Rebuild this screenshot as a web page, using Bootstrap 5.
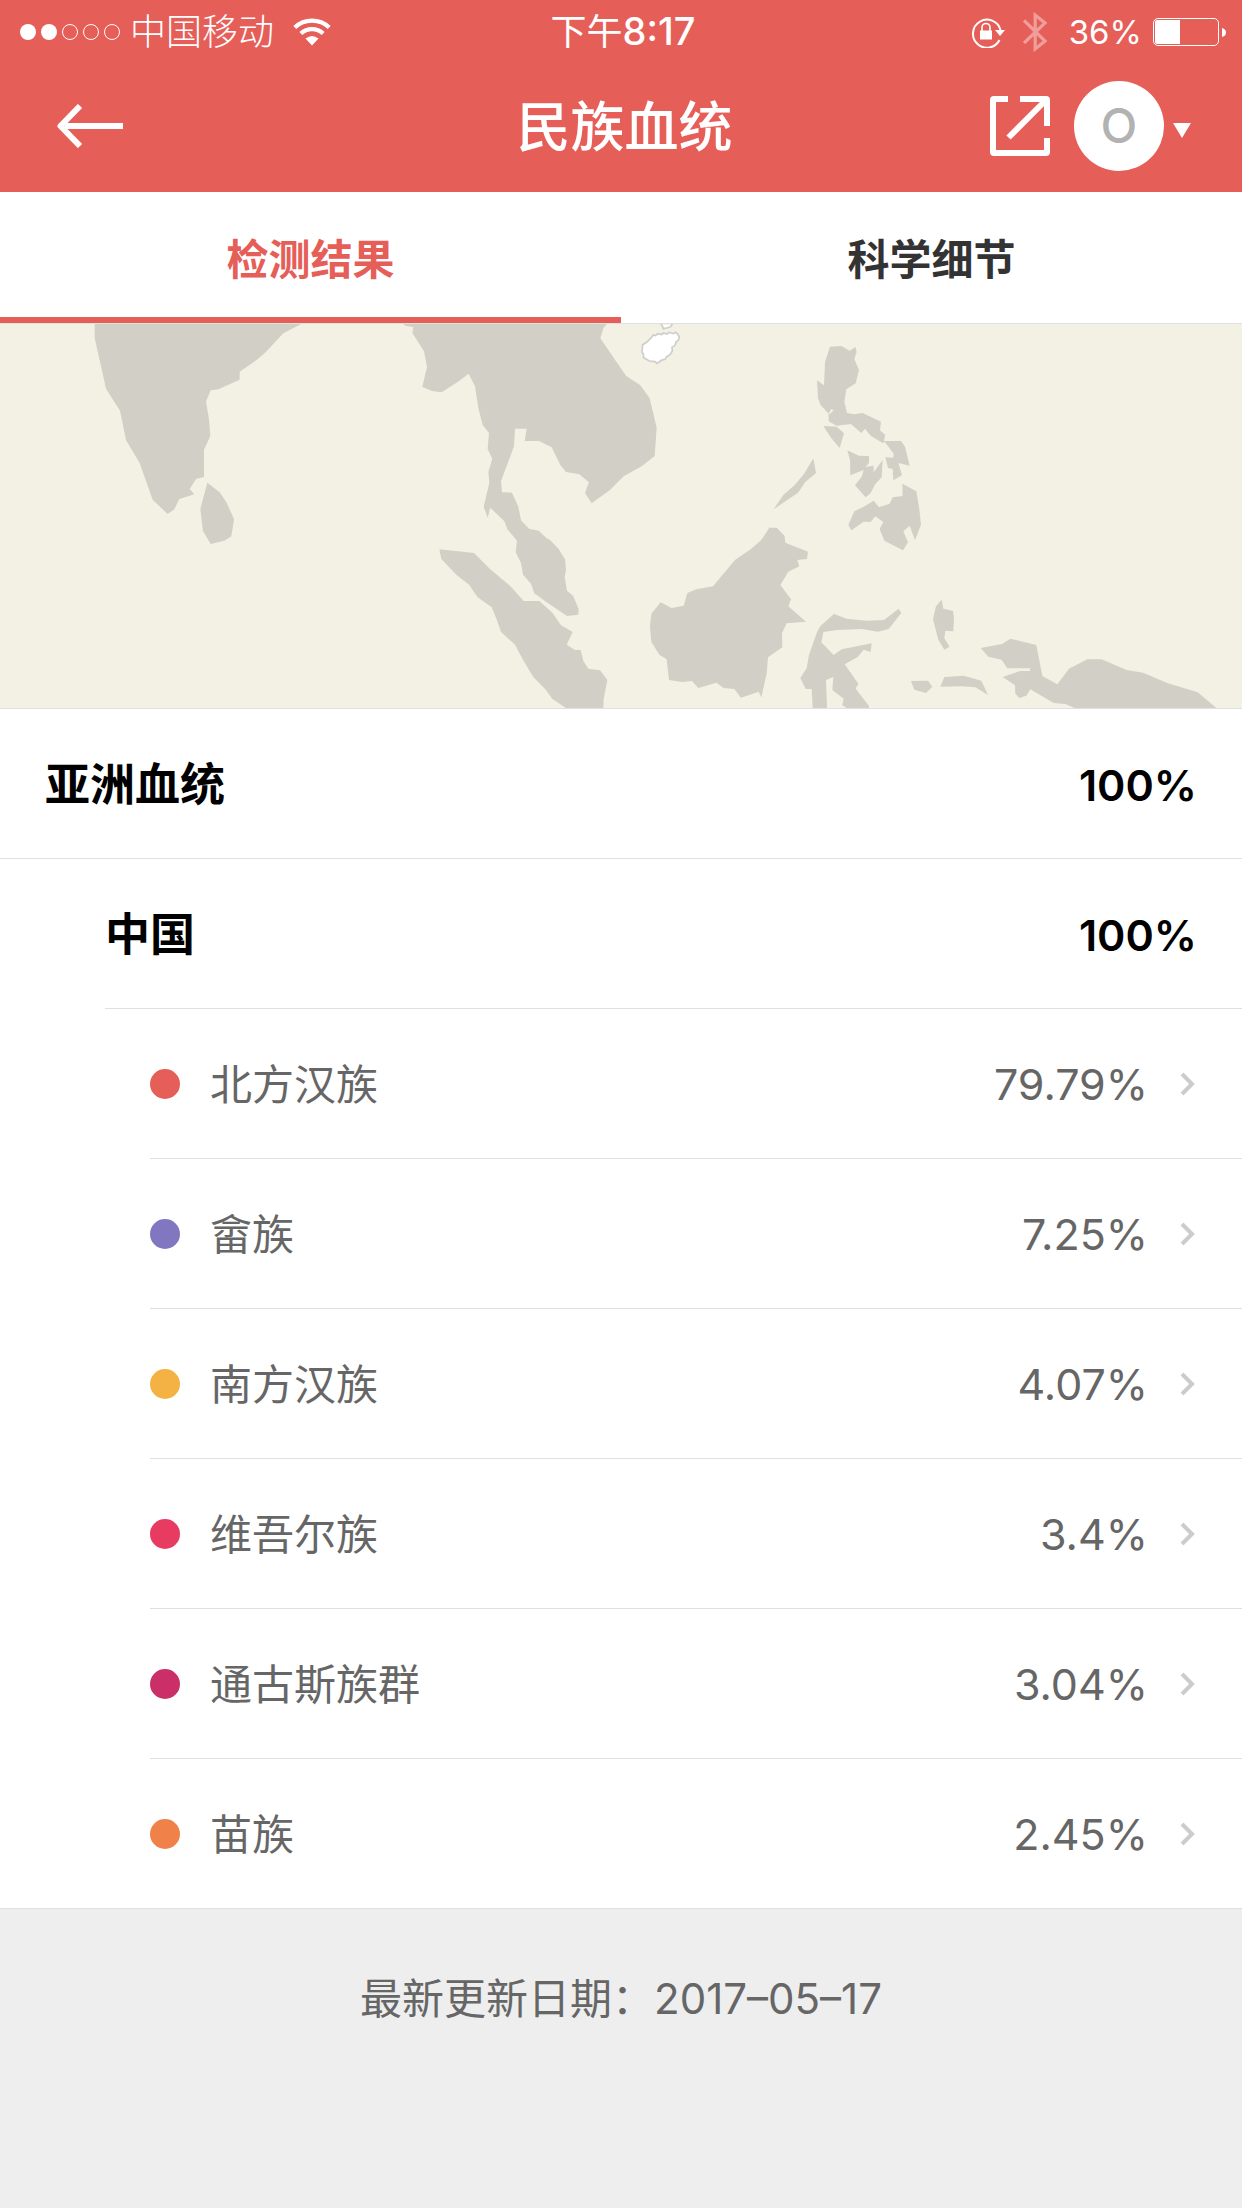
<!DOCTYPE html>
<html lang="zh-CN">
<head>
<meta charset="utf-8">
<meta name="viewport" content="width=device-width, initial-scale=1">
<title>民族血统</title>
<link href="https://cdn.jsdelivr.net/npm/bootstrap@5.3.0/dist/css/bootstrap.min.css" rel="stylesheet">
<style>
:root{--brand:#e65e58;--line:#e0e0e0}
body{font-family:Inter,"Noto Sans CJK SC",sans-serif;background:#eee;color:#666;font-size:42px;line-height:60px}
svg{display:block;flex:none}
.app-head{background:var(--brand);color:#fff}
.status-bar{display:grid;grid-template-columns:1fr auto 1fr;align-items:center;height:60px;padding:2px 16px 0 20px;font-size:36px;line-height:58px}
.carrier{font-weight:300;padding:0 19px 0 9px}
.clock{font-size:38px;font-weight:500}
.battery-text{font-size:33px;margin:0 10px 0 22px}
.title-bar{display:grid;grid-template-columns:1fr auto 1fr;align-items:center;height:132px;padding:0 50px 0 57px}
.title-bar h1{font-size:54px;line-height:72px;font-weight:500;margin:0;padding-top:4px}
.plain{background:none;border:0;padding:0;color:inherit}
.avatar{width:90px;height:90px;background:#fff;color:#b2b2b2;font-size:48px;font-weight:500;line-height:90px;text-align:center}
.result-tabs{background:#fff;border-bottom:1px solid var(--line)}
.result-tabs .nav-link{border:0;border-bottom:6px solid transparent;border-radius:0;background:none;color:#333;font-weight:700;padding:38px 0 27px}
.result-tabs .nav-link.active{color:var(--brand);border-color:var(--brand)}
.map-box{background:#f3f0e4;border-bottom:1px solid var(--line)}
.ancestry{background:#fff}
.line-row{display:flex;align-items:center;min-height:150px;padding-right:47px;border-bottom:1px solid var(--line);color:inherit;text-decoration:none}
.label{padding-top:3px}
.total{padding-right:45px;font-size:45px;font-weight:700;color:#000}
.total .pct{font-weight:600;padding-top:2px}
.continent{padding-left:45px}
.region{margin-left:105px}
.group-item{margin-left:150px}
.group-item:last-child{margin-left:0;padding-left:150px}
.dot{width:30px;height:30px;border-radius:50%;margin-right:30px}
.pct{margin-left:auto;font-size:43px}
.chev{margin-left:32px}
</style>
<script src="https://cdn.jsdelivr.net/npm/bootstrap@5.3.0/dist/js/bootstrap.bundle.min.js"></script>
</head>
<body>
<header class="app-head">
  <div class="status-bar">
    <div class="d-flex align-items-center">
      <svg width="101" height="18" viewBox="0 0 101 18" fill="#fff" aria-hidden="true"><circle cx="8" cy="9" r="8"/><circle cx="29" cy="9" r="8"/><g fill="none" stroke="#fff"><circle cx="50" cy="9" r="7.5"/><circle cx="71" cy="9" r="7.5"/><circle cx="92" cy="9" r="7.5"/></g></svg>
      <span class="carrier">中国移动</span>
      <svg width="38" height="28" viewBox="0 0 38 28" aria-hidden="true"><g fill="none" stroke="#fff" stroke-width="4.2"><path d="M1.800 9.500A25 25 0 0 1 36.200 9.500"/><path d="M7.800 15.500A16.500 16.500 0 0 1 30.200 15.500"/></g><path d="M12.500 20.500Q19 15.500 25.500 20.500L19 27.500Z" fill="#fff"/></svg>
    </div>
    <time><span>下午</span><span class="clock">8:17</span></time>
    <div class="d-flex align-items-center justify-content-end">
      <svg width="36" height="32" viewBox="0 0 36 32" aria-hidden="true"><path d="M28.500 24A14 14 0 1 1 29.500 14" fill="none" stroke="#fff" stroke-width="2"/><path d="M24 14H34L29 20Z" fill="#fff"/><rect x="9" y="14.500" width="12" height="9" fill="#fff"/><path d="M11 15V11.500a4 4 0 0 1 8 0V15" fill="none" stroke="#fff" stroke-width="1.600"/></svg>
      <svg class="ms-3" width="24" height="42" viewBox="0 0 24 42" aria-hidden="true"><path d="M1 9.500 22 30 12.200 38V4L22 12 1 32" fill="none" stroke="#fff" stroke-opacity=".4" stroke-width="3.200"/></svg>
      <span class="battery-text">36%</span>
      <svg width="74" height="30" viewBox="0 0 74 30" aria-hidden="true"><rect x="1.500" y="1.500" width="65" height="27" rx="4.500" fill="none" stroke="#fff"/><path d="M5 3H28V27H5Q3 27 3 25V5Q3 3 5 3ZM70 11Q74 12 74 15.500T70 20Z" fill="#fff"/></svg>
    </div>
  </div>
  <div class="title-bar">
    <button class="plain" type="button" aria-label="返回"><svg width="66" height="44" viewBox="0 0 66 44" fill="none" stroke="#fff" stroke-width="6" stroke-linejoin="round"><path d="M8 22H66M23 2 3.500 22 23 42"/></svg></button>
    <h1>民族血统</h1>
    <div class="d-flex align-items-center justify-content-end">
      <button class="plain" type="button" aria-label="分享"><svg width="60" height="60" viewBox="0 0 60 60" fill="none" stroke="#fff" stroke-width="6"><path d="M18 3H4Q3 3 3 4V56Q3 57 4 57H56Q57 57 57 56V42M30 3H56Q57 3 57 4V30M18.500 41.500 56 4"/></svg></button>
      <button class="plain d-flex align-items-center ms-4" type="button" aria-label="账户"><span class="avatar rounded-circle">O</span><svg class="ms-2 mt-2" width="20" height="16" viewBox="0 0 20 16"><path d="M1 1H19L10 16Z" fill="#fff"/></svg></button>
    </div>
  </div>
</header>

<nav class="result-tabs nav nav-fill" role="tablist">
  <button class="nav-link nav-item active w-50" type="button" role="tab" aria-selected="true">检测结果</button>
  <button class="nav-link nav-item w-50" type="button" role="tab" aria-selected="false">科学细节</button>
</nav>

<main>
  <div class="map-box">
    <svg class="w-100 h-auto" viewBox="0 0 1242 384" fill="#d2cfc6" role="img" aria-label="亚洲地图">
      <g transform="translate(0 -14) scale(.33333)">
        <path d="M284 30V84L318 236 360 302 378 390 419 459 458 569 503 612 523 598 538 567 583 553 569 537 588 507 612 501V419L631 378 627 328 618 275 632 241 655 238 719 209V185L770 150 797 127 850 70 915 36V30Z"/>
        <path d="M622 518 659 547 680 578 702 628 694 679 673 692 632 702 609 663 601 597Z"/>
      </g>
      <g transform="translate(400 -14) scale(.33333)">
        <path d="M0 36 16 47 40 51 37 69 72 124 81 171 67 231 96 243 125 247 173 216 206 191 225 229 235 294 248 345 267 369 263 418 277 446 265 485 268 518 251 590 263 623 271 593 313 634 323 659 351 692 347 727 363 759 369 794 393 821 403 850 439 876 501 918 535 914 536 897 519 857 501 842 494 801 498 781 495 748 476 717 451 691 439 684 416 662 387 656 363 631 355 590 336 548 306 547 303 514 342 409 345 356H380L374 393H417L455 412 481 465 498 486 538 493 567 517 555 549 575 580 630 540 671 499 725 469 764 438 770 353 749 265 721 226 678 197 601 85 610 55 625 36Z"/>
        <path d="M118 718 222 729 270 777 330 827 371 873H418L457 908 483 946 518 966 500 1004 525 1020H542L550 1053 565 1076 600 1081 622 1110 611 1167 610 1194H498L457 1167 438 1140 400 1101 371 1053 345 1004 303 966 291 931 275 892 232 861 208 825 170 795 124 747Z"/>
        <path d="M1108 653H1130L1154 678 1156 698 1224 725 1221 747 1192 750 1198 769 1165 785 1141 825 1173 868 1165 889 1218 935 1160 940 1146 970 1147 1012 1104 1042 1100 1091 1084 1162 1076 1145 1023 1163 1003 1137 971 1134 949 1118 895 1134 876 1113 846 1116 807 1110 800 1048 778 1034 754 995 750 950 754 911 782 877 815 894 851 887 862 849 889 838 939 829 1005 750 1052 718 1084 690Z"/>
        <g fill="#fff" stroke="#cfcdca" stroke-width="5"><path d="M755 82 760 75 767 77 773 71 785 74 790 69 801 72 808 67 820 71 827 67 833 72 838 81 835 91 829 95 825 106 816 112 817 123 810 134 800 140 795 148 784 151 771 160 765 155 748 153 731 143 730 132 726 126 728 104 741 96Z"/><path d="M782 40 788 50 790 56 800 54 812 50 818 40Z"/></g>
      </g>
      <g transform="translate(750 -14) scale(.33333)">
        <path d="M240 110 274 108 299 122 316 111 320 125 313 147 327 180 317 220 289 238 283 275 291 309 313 313 338 309 393 335 390 361 405 374 402 393H453L465 410 479 467 445 459 456 496 430 511 428 477 414 474 406 442 430 443 431 431 404 395 399 400 362 377 345 356 334 369 303 342 260 347 236 334V311L211 284 204 264 201 211 222 226 225 157Z"/>
        <path d="M220 348 260 350 282 370 269 414 243 383ZM292 421 327 437 357 438V459L346 471 371 467V487L398 450 395 502 376 522 362 549 347 562 315 526 335 500 341 480 301 496 300 450ZM190 445 198 489 166 516 144 548 71 598 100 555 134 525 162 492ZM457 521 499 544 508 596 513 644 495 691 479 647 460 664 474 697 459 721 403 692 389 657 400 636 376 619 362 636 341 635 304 661 295 645 313 604 341 590 371 572 387 592 419 581 428 562 458 558ZM575 869 580 896 609 903 612 924 610 964 586 962 583 985 599 1010 583 1019 565 989 549 928 558 889Z"/>
        <path d="M252 912 290 926 350 932 402 930 446 896 454 909 416 957 383 965 336 957 260 960 220 966 214 997 251 1035 275 1018 365 1000 362 1026 341 1019 323 1041 284 1063 325 1121 317 1136 357 1188V1194H290L277 1186 281 1166 247 1140 250 1101 228 1110 231 1194H188L185 1137H167L151 1104 170 1075 177 1035 202 964 212 947Z"/>
        <path d="M483 1113 534 1112 547 1130 528 1149 493 1139ZM583 1101 641 1097 694 1112 714 1155 676 1132 635 1129 571 1130ZM692 1014 756 1002 781 986 859 1005 877 1098 922 1123 957 1076 1012 1048H1055L1130 1080 1179 1088 1254 1120 1343 1147 1399 1194H974L946 1182 911 1179 841 1138 829 1157 808 1164 796 1151 795 1126 758 1101 810 1083H840V1075H772L755 1049 715 1040Z"/>
        <path d="M236 312 243 297 251 301 240 312Z" fill="#f3f0e4"/>
      </g>
    </svg>
  </div>

  <section class="ancestry">
    <div class="line-row total continent"><span class="label">亚洲血统</span><span class="pct">100%</span></div>
    <div class="line-row total region"><span class="label">中国</span><span class="pct">100%</span></div>
    <div>
      <a class="line-row group-item" href="#"><span class="dot" style="background:#e65e58"></span><span class="label">北方汉族</span><span class="pct">79.79%</span><svg class="chev" width="15" height="24" viewBox="0 0 15 24" fill="none" stroke="#ccc" stroke-width="4"><path d="M2 2 12 12 2 22"/></svg></a>
      <a class="line-row group-item" href="#"><span class="dot" style="background:#8077c0"></span><span class="label">畲族</span><span class="pct">7.25%</span><svg class="chev" width="15" height="24" viewBox="0 0 15 24" fill="none" stroke="#ccc" stroke-width="4"><path d="M2 2 12 12 2 22"/></svg></a>
      <a class="line-row group-item" href="#"><span class="dot" style="background:#f5b244"></span><span class="label">南方汉族</span><span class="pct">4.07%</span><svg class="chev" width="15" height="24" viewBox="0 0 15 24" fill="none" stroke="#ccc" stroke-width="4"><path d="M2 2 12 12 2 22"/></svg></a>
      <a class="line-row group-item" href="#"><span class="dot" style="background:#e83b62"></span><span class="label">维吾尔族</span><span class="pct">3.4%</span><svg class="chev" width="15" height="24" viewBox="0 0 15 24" fill="none" stroke="#ccc" stroke-width="4"><path d="M2 2 12 12 2 22"/></svg></a>
      <a class="line-row group-item" href="#"><span class="dot" style="background:#ca2f67"></span><span class="label">通古斯族群</span><span class="pct">3.04%</span><svg class="chev" width="15" height="24" viewBox="0 0 15 24" fill="none" stroke="#ccc" stroke-width="4"><path d="M2 2 12 12 2 22"/></svg></a>
      <a class="line-row group-item" href="#"><span class="dot" style="background:#ef8149"></span><span class="label">苗族</span><span class="pct">2.45%</span><svg class="chev" width="15" height="24" viewBox="0 0 15 24" fill="none" stroke="#ccc" stroke-width="4"><path d="M2 2 12 12 2 22"/></svg></a>
    </div>
  </section>
</main>
<footer class="text-center py-5"><p class="mt-2 pt-1 mb-3">最新更新日期：2017–05–17</p></footer>
</body>
</html>
